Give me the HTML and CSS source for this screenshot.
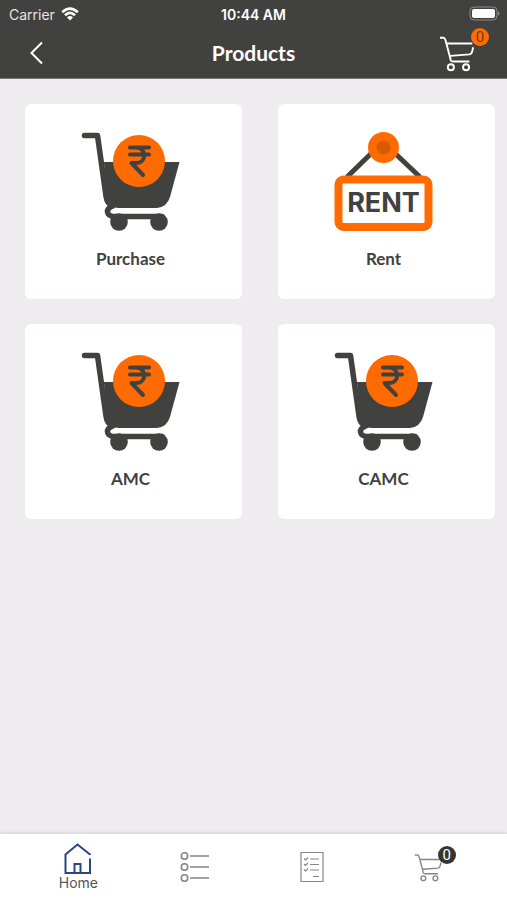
FILE: index.html
```
<!DOCTYPE html>
<html lang="en">
<head>
<meta charset="utf-8">
<meta name="viewport" content="width=device-width, initial-scale=1">
<title>Products</title>
<link rel="stylesheet" href="styles.css">
</head>
<body>
<svg class="defs" aria-hidden="true">
  <symbol id="cart-solid" viewBox="1 0 120 120">
    <path class="dark" d="M34 42H109.500L100 77Q97 87 87 88H49Q40 88 37 78Z"/>
    <path class="dark-line" d="M14.500 15.500H27.500L36 76Q37 84 43 86Q37 88 37.500 92Q38 96.500 45 96.500H92"/>
    <circle class="dark" cx="49" cy="102" r="8.800"/>
    <circle class="dark" cx="89" cy="102" r="8.800"/>
    <circle class="orange" cx="69" cy="41" r="26"/>
    <path class="rupee" d="M60 27.500H79M60 34.500H79M62 27.500H66C77 28 77 43 66 43H61.500L73 55"/>
  </symbol>
  <symbol id="cart-line" viewBox="0 0 40 40">
    <path d="M1 4H5Q6 4 7 7L12.500 28Q13 29 15 29H32M8.500 10H35M12 23L32 21.500Q34.500 21 35 18L36 14"/>
    <circle cx="12.500" cy="35" r="3.200"/>
    <circle cx="28.500" cy="35" r="3.200"/>
  </symbol>
</svg>
<header class="top">
  <div class="status">
    <span class="carrier">Carrier
      <svg class="wifi" viewBox="0 0 18 14" aria-hidden="true">
        <path d="M1.200 5.200Q9-2 16.800 5.200M4 8.200Q9 3.600 14 8.200"/>
        <path class="wifi-dot" d="M6 10.400Q9 7.800 12 10.400L9 13.500Z"/>
      </svg>
    </span>
    <span class="clock">10:44 AM</span>
    <svg class="battery" viewBox="0 0 32 16" aria-hidden="true">
      <rect class="battery-case" x="1" y="1" width="27" height="13" rx="4"/>
      <rect class="battery-fill" x="3" y="3" width="23" height="9" rx="2"/>
      <path class="battery-tip" d="M29 5Q32 7.500 29 10Z"/>
    </svg>
  </div>
  <div class="nav">
    <button class="back" aria-label="Back"><svg viewBox="0 0 14 24"><path d="M12 1.500L1.500 12L12 22.500"/></svg></button>
    <h1 class="title">Products</h1>
    <button class="cart" aria-label="Cart"><svg><use href="#cart-line"/></svg><span class="badge">0</span></button>
  </div>
</header>
<main class="grid">
  <a class="card" href="#purchase"><svg class="picture"><use href="#cart-solid"/></svg><span>Purchase</span></a>
  <a class="card" href="#rent">
    <svg class="picture" viewBox="1 0 120 120">
      <path class="rope" d="M24 57L60 22L97 57"/>
      <circle class="orange" cx="60.500" cy="27.500" r="15.500"/>
      <circle class="knob" cx="60.500" cy="27.500" r="7"/>
      <rect class="board" x="15.500" y="59.500" width="90" height="47.500" rx="5"/>
      <text class="sign" x="60.500" y="92">RENT</text>
    </svg>
    <span>Rent</span>
  </a>
  <a class="card" href="#amc"><svg class="picture"><use href="#cart-solid"/></svg><span>AMC</span></a>
  <a class="card" href="#camc"><svg class="picture"><use href="#cart-solid"/></svg><span>CAMC</span></a>
</main>
<nav class="tabs">
  <a class="tab active" href="#home">
    <svg class="home" viewBox="0 0 28 32"><path d="M26 12V11.500L13.500 1.500L1.500 11.500V30H26V15.500M10.500 30V21H16.500V30"/></svg>
    <span>Home</span>
  </a>
  <a class="tab" href="#list" aria-label="List">
    <svg class="list" viewBox="0 0 30 32"><circle cx="4.500" cy="5" r="3.200"/><circle cx="4.500" cy="16" r="3.200"/><circle cx="4.500" cy="27" r="3.200"/><path d="M10 5H29M10 16H29M10 27H29"/></svg>
  </a>
  <a class="tab" href="#orders" aria-label="Orders">
    <svg class="orders" viewBox="0 0 24 32"><path d="M1 1.500H23V30.500H1ZM10 8H19M10 13.500H19M10 19H19M13 25.500H19M4 7.500L5.500 9L8 6.500M4 13L5.500 14.500L8 12M4 18.500L5.500 20L8 17.500"/></svg>
  </a>
  <a class="tab" href="#cart" aria-label="Cart">
    <span class="tab-cart"><svg><use href="#cart-line"/></svg><span class="badge badge-dark">0</span></span>
  </a>
</nav>
</body>
</html>
```
FILE: styles.css
```
* {
  box-sizing: border-box;
}

body {
  margin: 0;
  min-height: 100vh;
  display: flex;
  flex-direction: column;
  background: #eeecee;
  color: #414141;
  font-family: Lato, sans-serif;
}

a {
  color: inherit;
  text-decoration: none;
}

button {
  padding: 0;
  border: 0;
  background: none;
  color: inherit;
}

svg {
  display: block;
  fill: none;
  stroke: currentColor;
}

.defs {
  position: absolute;
  width: 0;
  height: 0;
}

/* Header */
.top {
  background: #41413f;
  color: #fff;
  border-bottom: 1px solid #777775;
}

.status {
  display: grid;
  grid-template-columns: 1fr auto 1fr;
  align-items: center;
  height: 28px;
  padding: 0 6px;
  font: 14px Inter, sans-serif;
}

.carrier {
  display: flex;
  align-items: center;
  gap: 6px;
  padding-left: 3px;
  color: #e4e4e2;
}

.wifi {
  width: 18px;
  height: 14px;
  color: #fff;
  stroke-width: 2.6;
}

.wifi-dot {
  fill: #fff;
  stroke: none;
}

.clock {
  font-weight: 600;
}

.battery {
  width: 32px;
  height: 16px;
  justify-self: end;
}

.battery-case {
  stroke: #8c8c8a;
}

.battery-fill {
  fill: #fff;
  stroke: none;
}

.battery-tip {
  fill: #8c8c8a;
  stroke: none;
}

.nav {
  display: grid;
  grid-template-columns: 1fr auto 1fr;
  align-items: center;
  height: 50px;
  padding: 0 30px;
}

.back {
  justify-self: start;
}

.back svg {
  width: 14px;
  height: 24px;
  stroke-width: 2;
}

.title {
  margin: 0;
  font-size: 21px;
  line-height: 24px;
  font-weight: 700;
}

.cart {
  position: relative;
  justify-self: end;
}

.cart svg {
  width: 38px;
  height: 38px;
  stroke-width: 2;
}

.badge {
  position: absolute;
  top: -6px;
  right: -12px;
  width: 18px;
  height: 18px;
  border-radius: 50%;
  background: #ff6b00;
  color: #6b3c14;
  font: 15px/18px Roboto, sans-serif;
  text-align: center;
}

/* Product cards */
.grid {
  flex: 1;
  display: grid;
  grid-template-columns: 1fr 1fr;
  align-content: start;
  gap: 25px 36px;
  padding: 25px 12px 24px 25px;
}

.card {
  display: flex;
  flex-direction: column;
  align-items: center;
  gap: 8px;
  padding: 16px 6px 29px 0;
  border-radius: 6px;
  background: #fff;
  font-size: 17px;
  line-height: 22px;
  font-weight: 700;
}

.picture {
  width: 120px;
  height: 120px;
}

.dark {
  fill: #41413f;
  stroke: none;
}

.dark-line {
  stroke: #41413f;
  stroke-width: 5.5;
  stroke-linecap: round;
  stroke-linejoin: round;
}

.orange {
  fill: #ff6b00;
  stroke: none;
}

.rupee {
  stroke: #41413f;
  stroke-width: 4;
  stroke-linecap: round;
  stroke-linejoin: round;
}

.rope {
  stroke: #41413f;
  stroke-width: 5;
}

.knob {
  fill: #d95b00;
  stroke: none;
}

.board {
  fill: #fff;
  stroke: #ff6b00;
  stroke-width: 8;
}

.sign {
  fill: #41413f;
  stroke: none;
  font: 700 27px Inter, sans-serif;
  text-anchor: middle;
}

/* Bottom tab bar */
.tabs {
  display: grid;
  grid-template-columns: repeat(4, 1fr);
  align-items: center;
  height: 66px;
  padding: 0 20px;
  background: #fff;
  box-shadow: 0 -1px 3px rgba(0, 0, 0, 0.12);
}

.tab {
  display: flex;
  flex-direction: column;
  align-items: center;
  color: #858585;
  font: 14px/16px Inter, sans-serif;
}

.active span {
  color: #555;
}

.home {
  width: 28px;
  height: 32px;
  color: #2c4585;
  stroke-width: 2;
}

.list {
  width: 30px;
  height: 32px;
  stroke-width: 1.6;
}

.orders {
  width: 24px;
  height: 32px;
  stroke-width: 1.2;
}

.tab-cart {
  position: relative;
}

.tab-cart svg {
  width: 30px;
  height: 30px;
  stroke-width: 1.8;
}

.badge-dark {
  background: #353533;
  color: #fff;
}
```
